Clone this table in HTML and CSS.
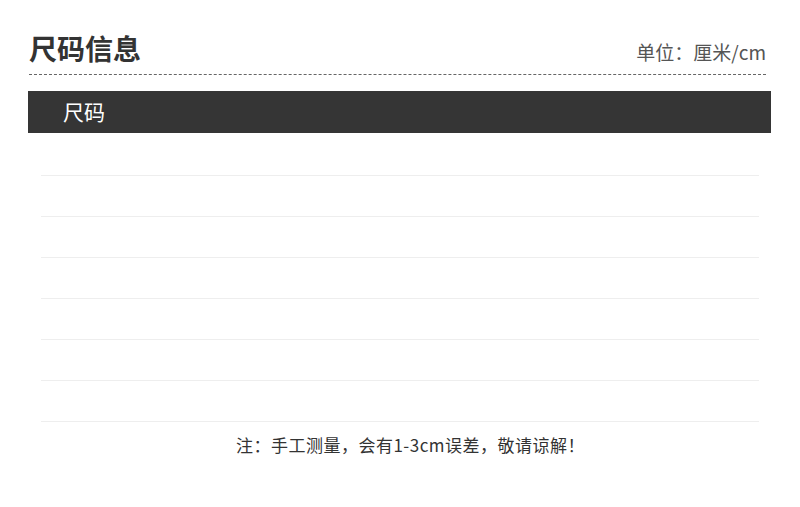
FILE: index.html
```html
<!DOCTYPE html>
<html lang="zh">
<head>
<meta charset="utf-8">
<link rel="stylesheet" href="styles.css">
</head>
<body>
<div class="page">
  <div class="header">
    <h1 class="title">尺码信息</h1>
    <div class="unit">单位：厘米/cm</div>
  </div>
  <div class="bar">尺码</div>
  <div class="rows">
    <div class="row first"></div>
    <div class="row"></div>
    <div class="row"></div>
    <div class="row"></div>
    <div class="row"></div>
    <div class="row"></div>
    <div class="row"></div>
  </div>
  <p class="note">注：手工测量，会有1-3cm误差，敬请谅解！</p>
</div>
</body>
</html>
```
FILE: styles.css
```css
html, body {
  margin: 0;
  padding: 0;
  background: #fff;
}
body {
  font-family: "Noto Sans CJK SC", "Noto Sans", sans-serif;
  color: #333;
}
.page {
  width: 800px;
  padding-left: 28px;
  box-sizing: border-box;
}
.header {
  display: flex;
  justify-content: space-between;
  align-items: baseline;
  margin-left: 1px;
  width: 737px;
  padding-top: 32px;
  padding-bottom: 10px;
  border-bottom: 1px dashed #666;
}
.title {
  margin: 0;
  font-size: 28px;
  line-height: 32px;
  font-weight: 700;
  color: #333;
}
.unit {
  font-size: 19px;
  line-height: 24px;
  color: #555;
  font-weight: 400;
}
.bar {
  margin-top: 16px;
  width: 743px;
  height: 42px;
  background: #353535;
  color: #fff;
  font-size: 21px;
  line-height: 40px;
  padding-left: 35px;
  box-sizing: border-box;
}
.rows {
  margin-left: 13px;
  width: 718px;
}
.row {
  height: 40px;
  border-bottom: 1px solid #eeeeee;
}
.row.first {
  height: 42px;
}
.note {
  margin: 0;
  width: 755px;
  box-sizing: border-box;
  padding-left: 10px;
  text-align: center;
  font-size: 17px;
  line-height: 24px;
  padding-top: 11px;
  letter-spacing: 0.5px;
  color: #333;
}
```
